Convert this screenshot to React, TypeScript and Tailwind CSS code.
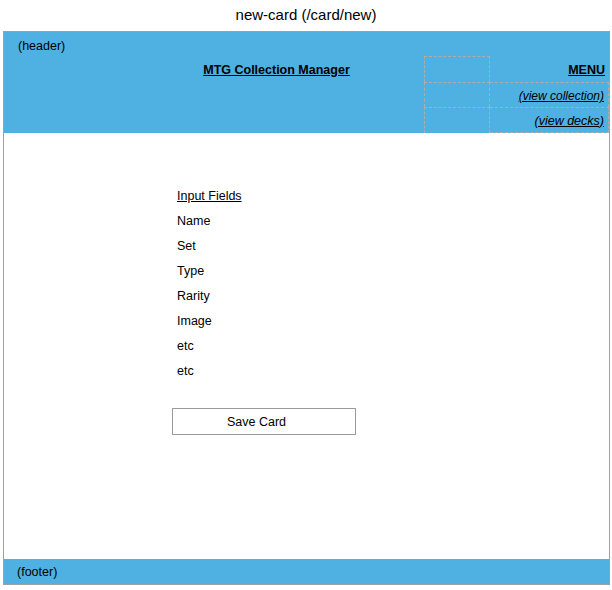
import React from 'react';

const fields = ['Name', 'Set', 'Type', 'Rarity', 'Image', 'etc', 'etc'];

export default function App() {
  return (
    <div className="w-[612px] h-[590px] bg-white text-black font-['Liberation_Sans',Arial,sans-serif]">
      <div className="h-[31px] flex items-center justify-center text-[15px]">new-card (/card/new)</div>

      <div className="ml-[3px] w-[607px] h-[554px] border border-[#a0a0a0] flex flex-col">
        {/* header */}
        <div className="h-[101px] bg-[#4eb1e2] flex flex-col">
          <div className="h-[24px] pl-[14px] pt-[7px] text-[12.5px] leading-[14px]">(header)</div>
          <div className="flex">
            <div className="w-[420px] pl-[125px] h-[26px] pt-[3px] flex items-center justify-center">
              <span className="text-[12.5px] font-bold underline">MTG Collection Manager</span>
            </div>
            <div className="w-[185px] grid grid-cols-[66px_119px] grid-rows-[26px_25px_26px] text-[12.5px]">
              <div className="border-t border-l border-r border-dashed border-[#b4aca4]" />
              <div className="flex items-center justify-end pr-[4px] pt-[3px]">
                <span className="font-bold underline">MENU</span>
              </div>
              <div className="border-t border-l border-r border-dashed border-[#b4aca4]" />
              <div className="border-t border-r border-dashed border-[#b4aca4] flex items-center justify-end pr-[4px] pt-[2px]">
                <span className="italic underline text-[12px]">(view collection)</span>
              </div>
              <div className="border-t border-l border-r border-dashed border-[#b4aca4]" />
              <div className="border-t border-r border-b border-dashed border-[#b4aca4] flex items-center justify-end pr-[4px] pt-[2px]">
                <span className="italic underline">(view decks)</span>
              </div>
            </div>
          </div>
        </div>

        {/* body */}
        <div className="flex-1 pt-[51px] text-[12.5px]">
          <div className="ml-[173px] leading-[25px] underline">Input Fields</div>
          {fields.map((f, i) => (
            <div key={i} className="ml-[173px] leading-[25px]">{f}</div>
          ))}
          <button className="mt-[24px] ml-[168px] w-[184px] h-[27px] border border-[#9a9a9a] bg-white text-[12.5px] pr-[15px] pt-[2px]">
            Save Card
          </button>
        </div>

        {/* footer */}
        <div className="h-[25px] bg-[#4eb1e2] flex items-center pl-[13px] pt-[2px] text-[12.5px]">(footer)</div>
      </div>
    </div>
  );
}
